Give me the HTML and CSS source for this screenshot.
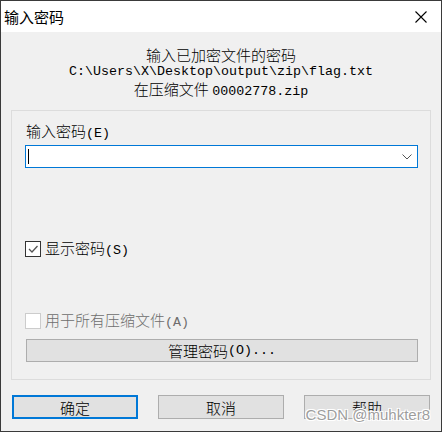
FILE: index.html
```html
<!DOCTYPE html>
<html lang="zh-CN">
<head>
<meta charset="utf-8">
<title>输入密码</title>
<link rel="stylesheet" href="styles.css">
</head>
<body>
<div class="win">
  <div class="titlebar">
    <span class="title">输入密码</span>
    <svg class="close" width="12" height="12" viewBox="0 0 12 12"><path d="M0.5 0.5L11.5 11.5M11.5 0.5L0.5 11.5" stroke="#000" stroke-width="1.1" fill="none"/></svg>
  </div>
  <div class="client">
    <div class="info">
      <div class="line">输入已加密文件的密码</div>
      <div class="line a">C:\Users\X\Desktop\output\zip\flag.txt</div>
      <div class="line">在压缩文件 <span class="a">00002778.zip</span></div>
    </div>
    <div class="group">
      <div class="label">输入密码<span class="a">(E)</span></div>
      <div class="combo">
        <span class="caret"></span>
        <svg class="chev" width="10" height="6" viewBox="0 0 10 6"><path d="M0.5 0.5L5 5L9.5 0.5" stroke="#555" stroke-width="1" fill="none"/></svg>
      </div>
      <div class="check first">
        <span class="box"><svg width="14" height="14" viewBox="0 0 14 14"><path d="M3 7L6 10L11.5 4" stroke="#555" stroke-width="1.3" fill="none"/></svg></span>
        <span class="ctext">显示密码<span class="a">(S)</span></span>
      </div>
      <div class="check disabled">
        <span class="box"></span>
        <span class="ctext">用于所有压缩文件<span class="a">(A)</span></span>
      </div>
      <div class="btn wide">管理密码<span class="a">(O)...</span></div>
    </div>
    <div class="buttons">
      <div class="btn def">确定</div>
      <div class="btn">取消</div>
      <div class="btn">帮助</div>
    </div>
  </div>
  <div class="watermark">CSDN @muhkter8</div>
</div>
</body>
</html>
```
FILE: styles.css
```css
html, body {
  margin: 0;
  padding: 0;
  background: #2b2b2b;
}
body {
  width: 442px;
  height: 432px;
  overflow: hidden;
  font-family: "Noto Sans CJK SC", "Noto Sans", sans-serif;
  font-weight: 300;
  font-size: 15px;
  line-height: 17px;
  color: #000;
}
.win {
  position: relative;
  box-sizing: border-box;
  width: 442px;
  height: 432px;
  border: 1px solid #3a3a3a;
  background: #f0f0f0;
  display: flex;
  flex-direction: column;
}
.titlebar {
  height: 31px;
  background: #fff;
  display: flex;
  align-items: center;
  justify-content: space-between;
  padding: 0 14px 0 3px;
  flex: none;
}
.title {
  font-size: 15px;
  font-weight: 400;
  line-height: 17px;
}
.close {
  display: block;
}
.client {
  flex: 1;
  display: flex;
  flex-direction: column;
  padding-top: 14px;
}
.a {
  font-family: "Liberation Mono", monospace;
  font-weight: 400;
  font-size: 13.33px;
}
.info {
  text-align: center;
}
.line {
  height: 17px;
  line-height: 17px;
  white-space: nowrap;
}
.group {
  margin: 13px 10px 0 10px;
  border: 1px solid #dcdcdc;
  padding: 11px 12px 17px 13px;
  display: flex;
  flex-direction: column;
}
.label {
  padding-left: 1px;
  height: 17px;
}
.combo {
  margin-top: 6px;
  box-sizing: border-box;
  height: 23px;
  border: 1px solid #0078d7;
  background: #fff;
  display: flex;
  align-items: center;
  justify-content: space-between;
  padding: 0 5px 0 2px;
}
.caret {
  width: 1px;
  height: 15px;
  background: #000;
}
.chev {
  display: block;
  margin-top: 1px;
}
.check {
  display: flex;
  align-items: center;
  height: 16px;
  gap: 4px;
}
.check.first {
  margin-top: 73px;
}
.check.disabled {
  margin-top: 56px;
  color: #6d6d6d;
}
.box {
  box-sizing: border-box;
  width: 16px;
  height: 16px;
  border: 1px solid #333;
  background: #fff;
  display: flex;
  align-items: center;
  justify-content: center;
  flex: none;
}
.box svg {
  display: block;
}
.disabled .box {
  border-color: #cccccc;
}
.ctext {
  white-space: nowrap;
}
.btn {
  box-sizing: border-box;
  height: 24px;
  border: 1px solid #adadad;
  background: #e1e1e1;
  display: flex;
  align-items: center;
  justify-content: center;
  white-space: nowrap;
}
.btn.wide {
  margin-top: 10px;
  margin-left: 1px;
  height: 23px;
}
.buttons {
  margin: 15px 10px 0 11px;
  display: flex;
  gap: 20px;
}
.buttons .btn {
  width: 126px;
}
.btn.def {
  border: 2px solid #0078d7;
}
.watermark {
  position: absolute;
  right: 11px;
  bottom: 7px;
  font-family: "Liberation Sans", Arial, sans-serif;
  font-weight: 400;
  font-size: 15px;
  line-height: 18px;
  color: rgba(140, 140, 140, 0.85);
  text-shadow: 1px 1px 0 #fff, -1px -1px 0 #fff, 1px -1px 0 #fff, -1px 1px 0 #fff;
}
```
